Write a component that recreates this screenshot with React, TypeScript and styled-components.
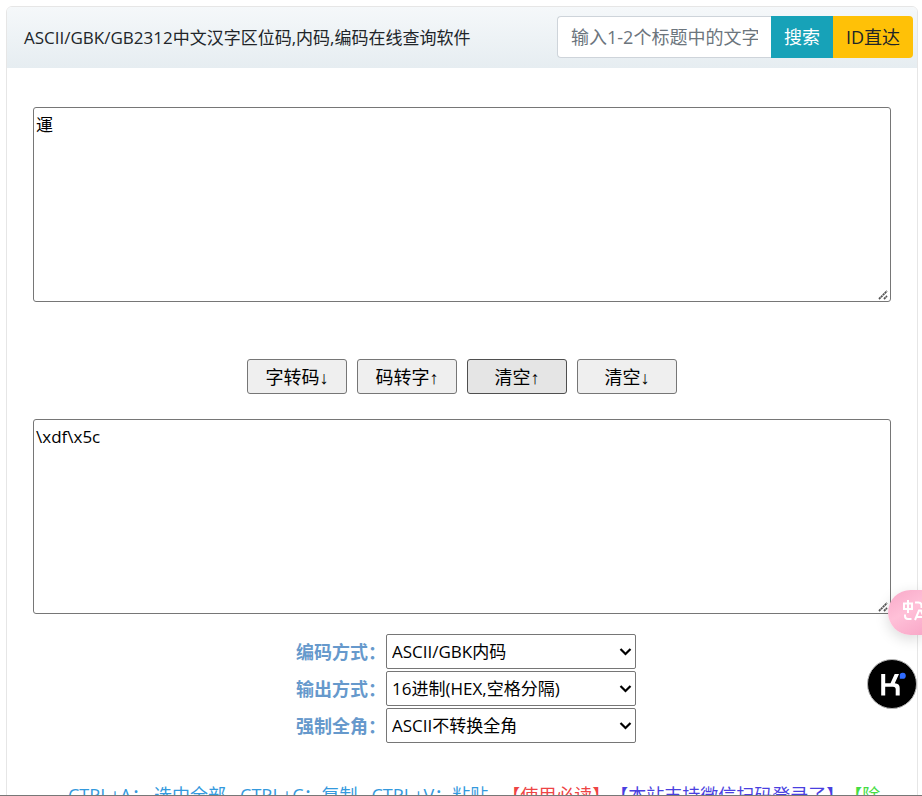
import React, { useState } from "react";
import styled, { createGlobalStyle } from "styled-components";

const GlobalStyle = createGlobalStyle`
  *, *::before, *::after { box-sizing: border-box; }
  html { height: 100%; overflow: hidden; }
  body {
    margin: 0;
    background: #fff;
    color: #212529;
    font-family: "Open Sans", "Noto Sans CJK SC", sans-serif;
    font-size: 17px;
    line-height: 26px;
  }
  button, input, select, textarea { font: inherit; margin: 0; }
`;

const Viewport = styled.div`
  height: 100vh;
  padding: 6px 4px 0 6px;
  overflow: hidden;
  border-bottom: 1px solid #777;
`;

const Card = styled.main`
  min-height: 120vh;
  border: 1px solid #e6e6e6;
  border-radius: 6px;
  overflow: hidden;
`;

const Header = styled.header`
  display: flex;
  align-items: center;
  justify-content: space-between;
  gap: 16px;
  height: 61px;
  padding: 0 4px 2px 17px;
  background: linear-gradient(#f5f8fa, #e6edf1);
`;

const Title = styled.h1`
  margin: 0;
  padding-top: 3px;
  font-size: 17px;
  font-weight: 400;
  white-space: nowrap;
`;

const SearchGroup = styled.form`
  display: flex;
  height: 42px;
`;

const SearchInput = styled.input`
  width: 214px;
  padding: 0 13px;
  border: 1px solid #ced4da;
  border-right: 0;
  border-radius: 4px 0 0 4px;
  background: #fff;
  outline: none;
  font-size: 18px;
  &::placeholder { color: #6c757d; opacity: 1; }
`;

const SearchButton = styled.button<{ $tone: "teal" | "amber" }>`
  width: ${(p) => (p.$tone === "teal" ? 62 : 80)}px;
  padding: 0;
  border: 0;
  border-radius: ${(p) => (p.$tone === "teal" ? "0" : "0 4px 4px 0")};
  background: ${(p) => (p.$tone === "teal" ? "#17a2b8" : "#ffc107")};
  color: ${(p) => (p.$tone === "teal" ? "#fff" : "#212529")};
  font-size: 18px;
`;

const Body = styled.div`
  display: flex;
  flex-direction: column;
  padding: 39px 26px 0;
`;

const resizerMark = encodeURIComponent(
  '<svg xmlns="http://www.w3.org/2000/svg" width="15" height="15"><path d="M4 13l8-8M9 13l3-3" stroke="#555" stroke-width="1.8" stroke-dasharray="2.2 .5" fill="none"/></svg>'
);

const CodeArea = styled.textarea`
  display: block;
  width: 100%;
  height: 195px;
  padding: 4px 2px;
  border: 1px solid #767676;
  border-radius: 3px;
  background: #fff;
  color: #000;
  outline: none;
  &::-webkit-resizer {
    background: url("data:image/svg+xml,${resizerMark}") no-repeat right bottom;
  }
`;

const Actions = styled.div`
  display: flex;
  justify-content: center;
  gap: 10px;
  padding: 57px 0 25px;
`;

const ActionButton = styled.button<{ $hovered?: boolean }>`
  width: 100px;
  height: 35px;
  padding: 2px 0 0;
  border: 1px solid ${(p) => (p.$hovered ? "#4f4f4f" : "#767676")};
  border-radius: 3px;
  background: ${(p) => (p.$hovered ? "#e5e5e5" : "#efefef")};
  color: #000;
  font-family: "Liberation Sans", "Noto Sans CJK SC", sans-serif;
  font-size: 18px;
`;

const Options = styled.div`
  display: grid;
  justify-content: center;
  gap: 2px;
  padding: 20px 0 0 8px;
`;

const OptionRow = styled.div`
  display: flex;
  align-items: center;
`;

const OptionLabel = styled.label`
  width: 90px;
  color: #6699cc;
  font-size: 18px;
  font-weight: 700;
  white-space: nowrap;
`;

const SelectBox = styled.div`
  position: relative;
  width: 250px;
  svg {
    position: absolute;
    right: 4px;
    top: 13px;
    pointer-events: none;
  }
`;

const OptionSelect = styled.select`
  display: block;
  appearance: none;
  width: 100%;
  height: 35px;
  padding: 0 20px 0 5px;
  border: 1px solid #767676;
  border-radius: 2px;
  background: #fff;
  color: #000;
`;

const Notes = styled.p`
  display: flex;
  margin: 39px 0 0 35px;
  font-size: 18px;
  white-space: nowrap;
`;

const Shortcut = styled.span`
  margin-right: 14px;
  color: #3399dd;
`;

const NoteLink = styled.a<{ $color: string }>`
  color: ${(p) => p.$color};
  text-decoration: none;
`;

const TranslateButton = styled.button`
  position: fixed;
  right: 0;
  top: 590px;
  width: 34px;
  height: 45px;
  padding: 0;
  border: 0;
  border-radius: 23px 0 0 23px;
  background: linear-gradient(150deg, #f8a9c8, #ffc0d8 50%, #f9a8c8);
  box-shadow: 0 4px 14px rgba(0, 0, 0, 0.15);
  overflow: hidden;
  svg { display: block; }
`;

const AssistantButton = styled.button`
  position: fixed;
  right: 5px;
  top: 659px;
  width: 50px;
  height: 50px;
  padding: 0;
  border: 1px solid #b5b5b5;
  border-radius: 50%;
  background: #000;
  svg { display: block; }
`;

const optionRows = [
  { id: "encoding", label: "编码方式：", value: "ASCII/GBK内码" },
  { id: "output", label: "输出方式：", value: "16进制(HEX,空格分隔)" },
  { id: "fullwidth", label: "强制全角：", value: "ASCII不转换全角" },
];

const notes = [
  { text: "【使用必读】", color: "#ee4444" },
  { text: "【本站支持微信扫码登录了】", color: "#4a3fe0" },
  { text: "【除", color: "#44dd44" },
];

export default function App() {
  const [source, setSource] = useState("運");
  const [code, setCode] = useState("\\xdf\\x5c");

  return (
    <>
      <GlobalStyle />
      <Viewport>
        <Card>
          <Header>
            <Title>ASCII/GBK/GB2312中文汉字区位码,内码,编码在线查询软件</Title>
            <SearchGroup onSubmit={(e) => e.preventDefault()}>
              <SearchInput aria-label="搜索标题" placeholder="输入1-2个标题中的文字" />
              <SearchButton $tone="teal">搜索</SearchButton>
              <SearchButton $tone="amber" type="button">ID直达</SearchButton>
            </SearchGroup>
          </Header>
          <Body>
            <CodeArea aria-label="文字" value={source} spellCheck={false} onChange={(e) => setSource(e.target.value)} />
            <Actions>
              <ActionButton type="button">字转码↓</ActionButton>
              <ActionButton type="button">码转字↑</ActionButton>
              <ActionButton type="button" $hovered onClick={() => setSource("")}>清空↑</ActionButton>
              <ActionButton type="button" onClick={() => setCode("")}>清空↓</ActionButton>
            </Actions>
            <CodeArea aria-label="编码" value={code} spellCheck={false} onChange={(e) => setCode(e.target.value)} />
            <Options>
              {optionRows.map((row) => (
                <OptionRow key={row.id}>
                  <OptionLabel htmlFor={row.id}>{row.label}</OptionLabel>
                  <SelectBox>
                    <OptionSelect id={row.id}>
                      <option>{row.value}</option>
                    </OptionSelect>
                    <svg width="13" height="10" viewBox="0 0 13 10" fill="none" stroke="#000" strokeWidth="2.2" aria-hidden="true">
                      <path d="M1.500 2l5 5 5-5" />
                    </svg>
                  </SelectBox>
                </OptionRow>
              ))}
            </Options>
            <Notes>
              <Shortcut>CTRL+A： 选中全部</Shortcut>
              <Shortcut>CTRL+C：复制</Shortcut>
              <Shortcut>CTRL+V：粘贴</Shortcut>
              {notes.map((note) => (
                <NoteLink key={note.text} href="#" $color={note.color}>{note.text}</NoteLink>
              ))}
            </Notes>
          </Body>
        </Card>
      </Viewport>
      <TranslateButton type="button" aria-label="翻译">
        <svg width="34" height="45" viewBox="0 0 34 45" fill="none" stroke="#fff" strokeWidth="2">
          <path d="M16 13.500h8v5.500h-8zM20 10v13M17 24.500v1.500q0 3 3 3h3.500M27 12.500h3.500q3 0 3 3v2.500M27 30l4-9.500h2l4 9.500M28.500 27h8" />
        </svg>
      </TranslateButton>
      <AssistantButton type="button" aria-label="助手">
        <svg width="48" height="48" viewBox="0 0 48 48">
          <path d="M13.200 14h4v9.200h5.300l4.200-9.200h4.300l-4.200 9.200q4.900.3 4.900 4.800v7.500h-4v-6q0-2.700-2.700-2.700h-7.800v8.700h-4z" fill="#fff" />
          <path d="M31.800 18.800v-2.800a3 3 0 1 1 3 2.800z" fill="#2f6bff" />
        </svg>
      </AssistantButton>
    </>
  );
}
